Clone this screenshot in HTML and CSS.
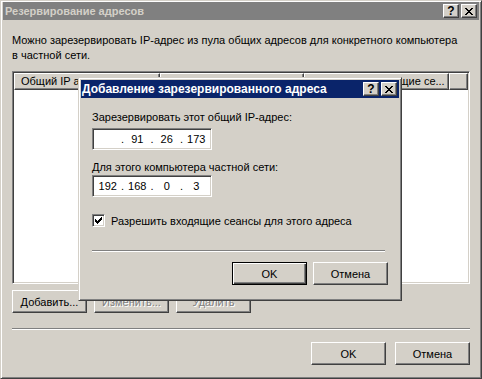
FILE: index.html
```html
<!DOCTYPE html>
<html lang="ru">
<head>
    <meta charset="UTF-8">
    <title>Резервирование адресов</title>
    <link rel="stylesheet" href="styles.css">
</head>
<body>
    <div class="window">
        <div class="titlebar inactive">
            <span class="title">Резервирование адресов</span>
            <div class="caption-btns">
                <span class="cap-btn help">?</span>
                <span class="cap-btn close">
                    <svg width="8" height="7" viewBox="0 0 8 7" shape-rendering="crispEdges">
                        <path d="M0 0h2v1h-2zM6 0h2v1h-2zM1 1h2v1h-2zM5 1h2v1h-2zM2 2h4v1h-4zM3 3h2v1h-2zM2 4h4v1h-4zM1 5h2v1h-2zM5 5h2v1h-2zM0 6h2v1h-2zM6 6h2v1h-2z" fill="#000"/>
                    </svg>
                </span>
            </div>
        </div>

        <div class="content">
            <p class="intro">Можно зарезервировать IP-адрес из пула общих адресов для конкретного компьютера<br>в частной сети.</p>

            <div class="listview">
                <div class="lv-header">
                    <div class="lv-col col-public">Общий IP адрес</div>
                    <div class="lv-col col-private">Частный IP-адрес</div>
                    <div class="lv-col col-inbound">Разрешить входящие се...</div>
                    <div class="lv-col col-fill"></div>
                </div>
                <div class="lv-body"></div>
            </div>

            <div class="btn-row">
                <button class="btn">Добавить...</button>
                <button class="btn" disabled>Изменить...</button>
                <button class="btn" disabled>Удалить</button>
            </div>

            <div class="separator"></div>

            <div class="btn-row right">
                <button class="btn">OK</button>
                <button class="btn">Отмена</button>
            </div>
        </div>

        <div class="dialog">
            <div class="titlebar active">
                <span class="title">Добавление зарезервированного адреса</span>
                <div class="caption-btns">
                    <span class="cap-btn help">?</span>
                    <span class="cap-btn close">
                        <svg width="8" height="7" viewBox="0 0 8 7" shape-rendering="crispEdges">
                            <path d="M0 0h2v1h-2zM6 0h2v1h-2zM1 1h2v1h-2zM5 1h2v1h-2zM2 2h4v1h-4zM3 3h2v1h-2zM2 4h4v1h-4zM1 5h2v1h-2zM5 5h2v1h-2zM0 6h2v1h-2zM6 6h2v1h-2z" fill="#000"/>
                        </svg>
                    </span>
                </div>
            </div>

            <div class="dialog-content">
                <label class="field-label">Зарезервировать этот общий IP-адрес:</label>
                <div class="ip-box">
                    <span class="ip-part"></span><span class="ip-dot">.</span>
                    <span class="ip-part">91</span><span class="ip-dot">.</span>
                    <span class="ip-part">26</span><span class="ip-dot">.</span>
                    <span class="ip-part">173</span>
                </div>

                <label class="field-label second">Для этого компьютера частной сети:</label>
                <div class="ip-box">
                    <span class="ip-part">192</span><span class="ip-dot">.</span>
                    <span class="ip-part">168</span><span class="ip-dot">.</span>
                    <span class="ip-part">0</span><span class="ip-dot">.</span>
                    <span class="ip-part">3</span>
                </div>

                <div class="check-row">
                    <span class="checkbox">
                        <svg width="7" height="7" viewBox="0 0 7 7" shape-rendering="crispEdges">
                            <path d="M6 0h1v1h-1zM5 1h2v1h-2zM0 2h1v1h-1zM4 2h3v1h-3zM0 3h2v1h-2zM3 3h3v1h-3zM0 4h5v1h-5zM1 5h3v1h-3zM2 6h1v1h-1z" fill="#000"/>
                        </svg>
                    </span>
                    <span>Разрешить входящие сеансы для этого адреса</span>
                </div>

                <div class="separator"></div>

                <div class="btn-row right">
                    <button class="btn default">OK</button>
                    <button class="btn">Отмена</button>
                </div>
            </div>
        </div>
    </div>
</body>
</html>
```

FILE: styles.css
```css
body {
    margin: 0;
    padding: 0;
    background-color: #d4d0c8;
    font-family: "Liberation Sans", Arial, sans-serif;
    font-size: 11px;
    color: #000;
}

.window {
    position: relative;
    box-sizing: border-box;
    width: 482px;
    height: 379px;
    padding: 1px 2px 2px 2px;
    background-color: #d4d0c8;
    border: 1px solid;
    border-color: #d4d0c8 #404040 #404040 #d4d0c8;
    box-shadow: inset 1px 1px #fff, inset -1px -1px #808080;
}

.titlebar {
    display: flex;
    justify-content: space-between;
    align-items: center;
    height: 18px;
    padding: 0 2px 0 2px;
    font-weight: bold;
}

.titlebar.inactive {
    background-color: #808080;
    color: #d4d0c8;
}

.titlebar.active {
    background-color: #0a246a;
    color: #fff;
    padding-left: 1px;
}

.titlebar.active .title {
    font-size: 12px;
}

.caption-btns {
    display: flex;
    gap: 1px;
}

.cap-btn {
    box-sizing: border-box;
    display: flex;
    justify-content: center;
    align-items: center;
    width: 16px;
    height: 14px;
    background-color: #d4d0c8;
    color: #000;
    font-weight: bold;
    font-size: 12px;
    border: 1px solid;
    border-color: #fff #404040 #404040 #fff;
    box-shadow: inset -1px -1px #808080;
}

.cap-btn.close {
    margin-left: 1px;
}

.content {
    padding: 13px 9px 0 9px;
}

.intro {
    margin: 0;
    line-height: 15px;
}

.listview {
    box-sizing: border-box;
    display: flex;
    flex-direction: column;
    height: 213px;
    margin-top: 8px;
    border: 1px solid;
    border-color: #808080 #fff #fff #808080;
    box-shadow: inset 1px 1px #404040, inset -1px -1px #d4d0c8;
    padding: 1px;
}

.lv-header {
    display: flex;
    height: 17px;
}

.lv-col {
    box-sizing: border-box;
    padding: 0 6px;
    line-height: 15px;
    white-space: nowrap;
    overflow: hidden;
    background-color: #d4d0c8;
    border: 1px solid;
    border-color: #fff #404040 #404040 #fff;
    box-shadow: inset -1px -1px #808080;
}

.col-public { width: 146px; }
.col-private { width: 144px; }
.col-inbound { width: 145px; }
.col-fill { flex: 1; }

.lv-body {
    flex: 1;
    background-color: #fff;
}

.btn-row {
    display: flex;
    gap: 7px;
    margin-top: 6px;
}

.btn-row.right {
    justify-content: flex-end;
    gap: 9px;
}

.btn {
    box-sizing: border-box;
    width: 75px;
    height: 23px;
    padding: 0;
    font-family: inherit;
    font-size: 11px;
    color: #000;
    background-color: #d4d0c8;
    border: 1px solid;
    border-color: #fff #404040 #404040 #fff;
    box-shadow: inset -1px -1px #808080, inset 1px 1px #d4d0c8;
    border-radius: 0;
}

.btn:disabled {
    color: #808080;
    text-shadow: 1px 1px #fff;
}

.btn.default {
    border: 1px solid #000;
    box-shadow: inset 1px 1px #fff, inset -1px -1px #404040, inset -2px -2px #808080;
}

.separator {
    height: 0;
    margin-top: 15px;
    border-top: 1px solid #808080;
    border-bottom: 1px solid #fff;
}

.content > .btn-row.right {
    margin-top: 12px;
}

.dialog {
    position: absolute;
    left: 77px;
    top: 76px;
    box-sizing: border-box;
    width: 324px;
    height: 224px;
    padding: 2px;
    background-color: #d4d0c8;
    border: 1px solid;
    border-color: #d4d0c8 #404040 #404040 #d4d0c8;
    box-shadow: inset 1px 1px #fff, inset -1px -1px #808080;
}

.dialog-content {
    padding: 13px 11px 0 11px;
}

.field-label {
    display: block;
    line-height: 13px;
}

.field-label.second {
    margin-top: 11px;
}

.ip-box {
    box-sizing: border-box;
    display: flex;
    width: 120px;
    height: 22px;
    margin-top: 4px;
    padding: 0 2px;
    align-items: center;
    background-color: #fff;
    border: 1px solid;
    border-color: #808080 #fff #fff #808080;
    box-shadow: inset 1px 1px #404040, inset -1px -1px #d4d0c8;
}

.field-label.second + .ip-box {
    margin-top: 1px;
}

.ip-part {
    width: 26px;
    text-align: center;
}

.ip-dot {
    width: 4px;
    text-align: center;
}

.check-row {
    display: flex;
    align-items: center;
    gap: 6px;
    margin-top: 17px;
    height: 13px;
}

.checkbox {
    box-sizing: border-box;
    display: flex;
    justify-content: center;
    align-items: center;
    width: 13px;
    height: 13px;
    background-color: #fff;
    border: 1px solid;
    border-color: #808080 #fff #fff #808080;
    box-shadow: inset 1px 1px #404040, inset -1px -1px #d4d0c8;
}

.dialog-content .separator {
    margin-top: 23px;
    margin-right: 3px;
}

.dialog-content .btn-row.right {
    margin-top: 10px;
    gap: 6px;
}
```
